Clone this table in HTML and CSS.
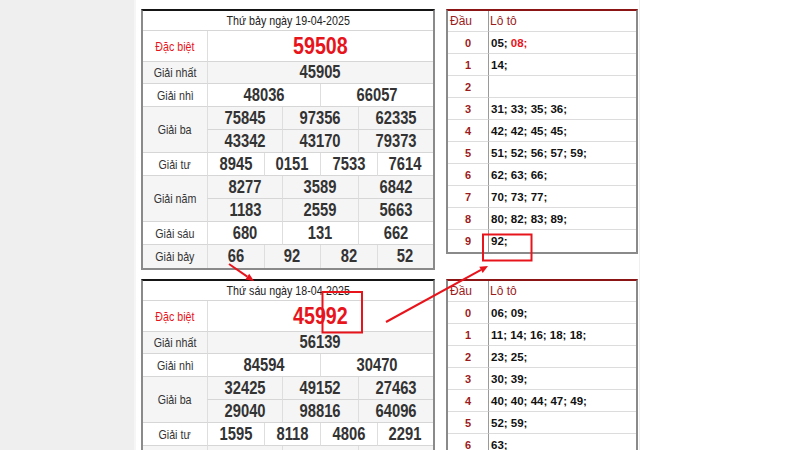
FILE: index.html
```html
<!DOCTYPE html>
<html lang="vi">
<head>
<meta charset="utf-8">
<title>Kết quả xổ số</title>
<link rel="stylesheet" href="styles.css">
</head>
<body>
<div class="page">
  <div class="side"></div>
  <div class="main">
    <div class="pair">
      <div class="kq">
        <div class="c head"><span class="t">Thứ bảy ngày 19-04-2025</span></div>
        <div class="c lbl red"><span class="t">Đặc biệt</span></div><div class="c n s12 db"><span class="t">59508</span></div>
        <div class="c lbl alt"><span class="t">Giải nhất</span></div><div class="c n s12 alt"><span class="t">45905</span></div>
        <div class="c lbl"><span class="t">Giải nhì</span></div><div class="c n s6"><span class="t">48036</span></div><div class="c n s6"><span class="t">66057</span></div>
        <div class="c lbl alt r2"><span class="t">Giải ba</span></div><div class="c n s4 alt"><span class="t">75845</span></div><div class="c n s4 alt"><span class="t">97356</span></div><div class="c n s4 alt"><span class="t">62335</span></div>
        <div class="c n s4 alt"><span class="t">43342</span></div><div class="c n s4 alt"><span class="t">43170</span></div><div class="c n s4 alt"><span class="t">79373</span></div>
        <div class="c lbl"><span class="t">Giải tư</span></div><div class="c n s3"><span class="t">8945</span></div><div class="c n s3"><span class="t">0151</span></div><div class="c n s3"><span class="t">7533</span></div><div class="c n s3"><span class="t">7614</span></div>
        <div class="c lbl alt r2"><span class="t">Giải năm</span></div><div class="c n s4 alt"><span class="t">8277</span></div><div class="c n s4 alt"><span class="t">3589</span></div><div class="c n s4 alt"><span class="t">6842</span></div>
        <div class="c n s4 alt"><span class="t">1183</span></div><div class="c n s4 alt"><span class="t">2559</span></div><div class="c n s4 alt"><span class="t">5663</span></div>
        <div class="c lbl"><span class="t">Giải sáu</span></div><div class="c n s4"><span class="t">680</span></div><div class="c n s4"><span class="t">131</span></div><div class="c n s4"><span class="t">662</span></div>
        <div class="c lbl alt last"><span class="t">Giải bảy</span></div><div class="c n s3 alt last"><span class="t">66</span></div><div class="c n s3 alt last"><span class="t">92</span></div><div class="c n s3 alt last"><span class="t">82</span></div><div class="c n s3 alt last"><span class="t">52</span></div>
      </div>
      <div class="lt">
        <div class="c dh">Đầu</div><div class="c lh">Lô tô</div>
        <div class="c d">0</div><div class="c v">05;&nbsp;<span class="hot">08;</span></div>
        <div class="c d">1</div><div class="c v">14;</div>
        <div class="c d">2</div><div class="c v"></div>
        <div class="c d">3</div><div class="c v">31; 33; 35; 36;</div>
        <div class="c d">4</div><div class="c v">42; 42; 45; 45;</div>
        <div class="c d">5</div><div class="c v">51; 52; 56; 57; 59;</div>
        <div class="c d">6</div><div class="c v">62; 63; 66;</div>
        <div class="c d">7</div><div class="c v">70; 73; 77;</div>
        <div class="c d">8</div><div class="c v">80; 82; 83; 89;</div>
        <div class="c d last">9</div><div class="c v last">92;</div>
      </div>
    </div>
    <div class="pair">
      <div class="kq">
        <div class="c head"><span class="t">Thứ sáu ngày 18-04-2025</span></div>
        <div class="c lbl red"><span class="t">Đặc biệt</span></div><div class="c n s12 db"><span class="t">45992</span></div>
        <div class="c lbl alt"><span class="t">Giải nhất</span></div><div class="c n s12 alt"><span class="t">56139</span></div>
        <div class="c lbl"><span class="t">Giải nhì</span></div><div class="c n s6"><span class="t">84594</span></div><div class="c n s6"><span class="t">30470</span></div>
        <div class="c lbl alt r2"><span class="t">Giải ba</span></div><div class="c n s4 alt"><span class="t">32425</span></div><div class="c n s4 alt"><span class="t">49152</span></div><div class="c n s4 alt"><span class="t">27463</span></div>
        <div class="c n s4 alt"><span class="t">29040</span></div><div class="c n s4 alt"><span class="t">98816</span></div><div class="c n s4 alt"><span class="t">64096</span></div>
        <div class="c lbl"><span class="t">Giải tư</span></div><div class="c n s3"><span class="t">1595</span></div><div class="c n s3"><span class="t">8118</span></div><div class="c n s3"><span class="t">4806</span></div><div class="c n s3"><span class="t">2291</span></div>
        <div class="c lbl alt"></div><div class="c n s4 alt"></div><div class="c n s4 alt"></div><div class="c n s4 alt"></div>
      </div>
      <div class="lt">
        <div class="c dh">Đầu</div><div class="c lh">Lô tô</div>
        <div class="c d">0</div><div class="c v">06; 09;</div>
        <div class="c d">1</div><div class="c v">11; 14; 16; 18; 18;</div>
        <div class="c d">2</div><div class="c v">23; 25;</div>
        <div class="c d">3</div><div class="c v">30; 39;</div>
        <div class="c d">4</div><div class="c v">40; 40; 44; 47; 49;</div>
        <div class="c d">5</div><div class="c v">52; 59;</div>
        <div class="c d">6</div><div class="c v">63;</div>
        <div class="c d"></div><div class="c v"></div>
      </div>
    </div>
  </div>
</div>
<svg class="marks" width="800" height="450" viewBox="0 0 800 450">
  <line x1="229" y1="264" x2="247.3" y2="276.6" class="ln"/>
  <polygon points="254,281 245.4,279.5 249.2,273.7" class="hd"/>
  <rect x="322.5" y="292" width="39.5" height="40.5" class="bx"/>
  <line x1="386" y1="322" x2="481" y2="269.9" class="ln"/>
  <polygon points="488,266 482.7,272.9 479.3,266.8" class="hd"/>
  <rect x="483" y="234.5" width="48.5" height="26" class="bx"/>
</svg>
</body>
</html>
```

FILE: styles.css
```css
* { box-sizing: border-box; margin: 0; padding: 0; }

body {
  width: 800px;
  height: 450px;
  overflow: hidden;
  position: relative;
  background: #fff;
  font-family: "Liberation Sans", Arial, sans-serif;
  color: #333;
}

.page { display: flex; min-height: 450px; }

.side { width: 134px; flex: none; background: #efefef; }

.main {
  width: 506px;
  flex: none;
  background: #fff;
  border-left: 2px solid #f6f6f6;
  border-right: 1px solid #efefef;
  padding: 9px 0 0 5px;
}

.pair { display: flex; gap: 11px; align-items: flex-start; margin-bottom: 9px; }

/* results table */
.kq {
  width: 294px;
  flex: none;
  border: 2px solid #8a8a8a;
  border-top-color: #151515;
  display: grid;
  grid-template-columns: 64px repeat(12, 1fr);
  grid-template-rows: 20px 31px 22px repeat(8, 23px);
  grid-auto-rows: 23px;
}

.c {
  display: flex;
  align-items: center;
  justify-content: center;
  border-bottom: 1px solid #d6d6d6;
  white-space: nowrap;
  overflow: hidden;
}

/* the printed table uses a narrow face: condense the glyphs */
.t { display: inline-block; transform: scaleX(0.82); }

.head { grid-column: 1 / -1; font-size: 13px; color: #222; }

.lbl { grid-column: 1; font-size: 13px; color: #333; }
.lbl.red { color: #e8141c; }
.r2 { grid-row: span 2; }

.n {
  border-left: 1px solid #dedede;
  font-weight: bold;
  font-size: 18px;
  color: #333;
}
.s12 { grid-column: span 12; }
.s6 { grid-column: span 6; }
.s4 { grid-column: span 4; }
.s3 { grid-column: span 3; }

.db { font-size: 24px; color: #e8141c; }

.alt { background: #f5f5f5; }
.last { border-bottom: 0; }

/* loto table */
.lt {
  width: 192px;
  flex: none;
  border: 2px solid #8a8a8a;
  border-top-color: #8b1414;
  display: grid;
  grid-template-columns: 41px 1fr;
  grid-template-rows: 21px;
  grid-auto-rows: 22px;
  font-size: 12px;
}

.lt .c { border-bottom-color: #dcdcdc; }
.lt .last { border-bottom: 0; }

.dh, .d { border-right: 1px solid #9a9a9a; }
.dh { justify-content: flex-start; padding-left: 2px; color: #9b1c1c; }
.lh { justify-content: flex-start; padding-left: 1px; color: #9b1c1c; }

.d { font-weight: bold; font-size: 11px; color: #9b1c1c; }
.v { justify-content: flex-start; padding-left: 2px; font-weight: bold; font-size: 11.5px; color: #111; }
.hot { color: #e8141c; }

/* annotation overlay */
.marks { position: absolute; left: 0; top: 0; pointer-events: none; }
.ln { stroke: #e8141c; stroke-width: 2; }
.hd { fill: #e8141c; }
.bx { fill: none; stroke: #e8141c; stroke-width: 2; }
```
